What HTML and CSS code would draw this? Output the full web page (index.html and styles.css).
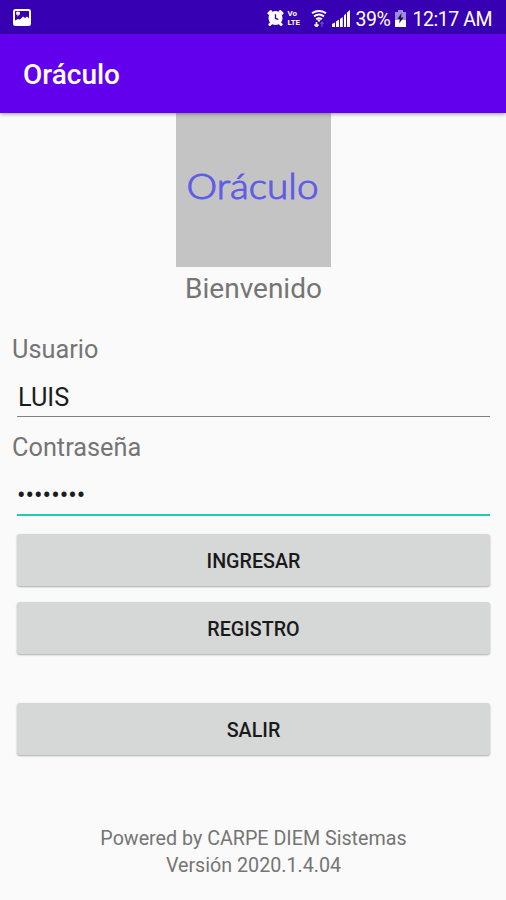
FILE: index.html
```html
<!DOCTYPE html>
<html lang="es">
<head>
  <meta charset="UTF-8" />
  <meta name="viewport" content="width=device-width, initial-scale=1" />
  <title>Oráculo</title>
  <link rel="stylesheet" href="styles.css">
</head>
<body>

  <div class="status-bar">
    <svg class="icon-picture" width="18" height="17" viewBox="0 0 18 17">
      <rect x="1" y="1" width="16" height="15" rx="1.5" fill="none" stroke="#fff" stroke-width="2" />
      <path d="M2 11.500l3-1.500 2 .5 3-3 2 1.500 2-1.500 2 2v6H2z" fill="#fff" />
      <path d="M3.500 3h3v2.500h-3zM4 7l2-1" fill="#fff" stroke="#fff" stroke-width=".6" />
    </svg>
    <div class="status-right">
      <svg class="icon-alarm" width="17" height="18" viewBox="0 0 18 18">
        <circle cx="9" cy="9" r="7.5" fill="#fff" />
        <path d="M2 4l2-2M16 4l-2-2M3 16l2-2M15 16l-2-2" stroke="#fff" stroke-width="3" stroke-linecap="round" />
        <path d="M9 5v4.5l3 1" fill="none" stroke="#3700b3" stroke-width="1.4" />
      </svg>
      <div class="volte"><span>Vo</span><span>LTE</span></div>
      <svg class="icon-wifi" width="16" height="17" viewBox="0 0 16 17">
        <path d="M1 3.2q7-4.200 14 0M3 6.300q5-3.400 10 0M5.200 9.200q2.800-2 5.600 0" fill="none" stroke="#fff" stroke-width="2" />
        <path d="M6 9.500h4l-2 2.800z" fill="#fff" />
        <path d="M5.500 12v5M3.500 14.500l2 2.200 2-2.200" fill="none" stroke="#fff" stroke-width="1.600" />
        <path d="M11 17v-5M9.500 14l1.500-2 1.500 2" fill="none" stroke="#6f48d0" stroke-width="1.200" />
      </svg>
      <svg class="icon-signal" width="18" height="17" viewBox="0 0 18 17">
        <path d="M0 17v-3l3-1.500V17zM4 17v-5.500l3-2V17zM8 17V9l2.800-2v10zM12 17V5.500l2-2V17zM15 17V2.500L18 0v17z" fill="#fff" />
      </svg>
      <span class="battery-level">39%</span>
      <svg class="icon-battery" width="11" height="17" viewBox="0 0 11 17">
        <path d="M3 0h5v2h3v8H0V2h3z" fill="#a08ae0" />
        <path d="M0 10h11v7H0z" fill="#fff" />
        <path d="M6.500 3L2.500 9h2.300L4.200 13.500 8.500 7.500H6z" fill="#1b0e3c" />
      </svg>
      <span class="clock">12:17 AM</span>
    </div>
  </div>

  <header class="app-bar">
    <h1>Oráculo</h1>
  </header>

  <main>
    <svg class="logo" width="155" height="155" viewBox="0 0 155 155">
      <rect width="155" height="155" fill="#c4c4c4" />
      <text class="logo-text" x="10.500" y="86.500" textLength="132" lengthAdjust="spacingAndGlyphs">Oráculo</text>
    </svg>
    <h2>Bienvenido</h2>

    <form class="login">
      <label for="usuario">Usuario</label>
      <input id="usuario" class="field" type="text" value="LUIS">
      <label for="contrasena">Contraseña</label>
      <input id="contrasena" class="field active" type="password" value="12345678">

      <button class="btn" type="button">INGRESAR</button>
      <button class="btn" type="button">REGISTRO</button>
      <button class="btn exit" type="button">SALIR</button>
    </form>
  </main>

  <footer>
    <div>Powered by CARPE DIEM Sistemas</div>
    <div>Versión 2020.1.4.04</div>
  </footer>

</body>
</html>
```

FILE: styles.css
```css
* {
  box-sizing: border-box;
}
body {
  margin: 0;
  height: 900px;
  overflow: hidden;
  background-color: #fafafa;
  font-family: Roboto, sans-serif;
  color: #757575;
}
.status-bar {
  display: flex;
  align-items: center;
  justify-content: space-between;
  height: 34px;
  padding: 2px 14px 0 13px;
  background-color: #3700b3;
  color: white;
}
.icon-picture {
  margin-bottom: 2px;
}
.status-right {
  display: flex;
  align-items: center;
  font-size: 19.5px;
  letter-spacing: -0.45px;
}
.battery-level,
.clock {
  padding-top: 2px;
}
.volte {
  display: flex;
  flex-direction: column;
  width: 15px;
  margin: 0 8px 0 4px;
  font-size: 8px;
  font-weight: bold;
  line-height: 9px;
  letter-spacing: -0.2px;
}
.icon-signal {
  margin: 0 6px 0 5px;
}
.icon-battery {
  margin: 0 6px 0 5px;
}
.app-bar {
  position: relative;
  height: 79px;
  padding-left: 23px;
  background-color: #6200ee;
  box-shadow: 0 1px 4px rgba(0, 0, 0, 0.4);
}
.app-bar h1 {
  margin: 0;
  font-size: 28px;
  font-weight: 500;
  line-height: 82px;
  color: white;
}
.logo {
  display: block;
  margin: -1px auto 0;
}
.logo-text {
  font-family: Lato, sans-serif;
  font-size: 35px;
  font-weight: 300;
  fill: #5f5ce6;
  stroke: #5f5ce6;
  stroke-width: 1px;
}
h2 {
  margin: 4px 0 0;
  padding-left: 1px;
  font-size: 28px;
  font-weight: 400;
  line-height: 36px;
  text-align: center;
}
.login {
  display: flex;
  flex-direction: column;
  padding: 28px 16px 0 17px;
}
.login label {
  height: 30px;
  margin-left: -5px;
  font-size: 25.3px;
  line-height: 30px;
}
.field {
  height: 52px;
  margin: 0 0 16px;
  padding: 20px 0 6px 1px;
  border: 0;
  border-bottom: 1px solid #808080;
  background: none;
  font-family: inherit;
  font-size: 25.3px;
  line-height: 25px;
  color: #1c1c1c;
  outline: none;
}
.field.active {
  height: 53px;
  margin-bottom: 18px;
  padding-left: 0;
  border-bottom: 2px solid #1dcdb4;
}
.btn {
  height: 52px;
  margin-bottom: 16px;
  padding: 2px 0 0;
  border: 0;
  border-radius: 3px;
  background-color: #d6d7d7;
  box-shadow: 0 1px 2px rgba(0, 0, 0, 0.32);
  font-family: inherit;
  font-size: 19.7px;
  font-weight: 500;
  color: #1a1a1a;
}
.btn.exit {
  margin-top: 33px;
}
footer {
  margin-top: 54px;
  padding-left: 1px;
  font-size: 19.7px;
  line-height: 27px;
  text-align: center;
}
```
